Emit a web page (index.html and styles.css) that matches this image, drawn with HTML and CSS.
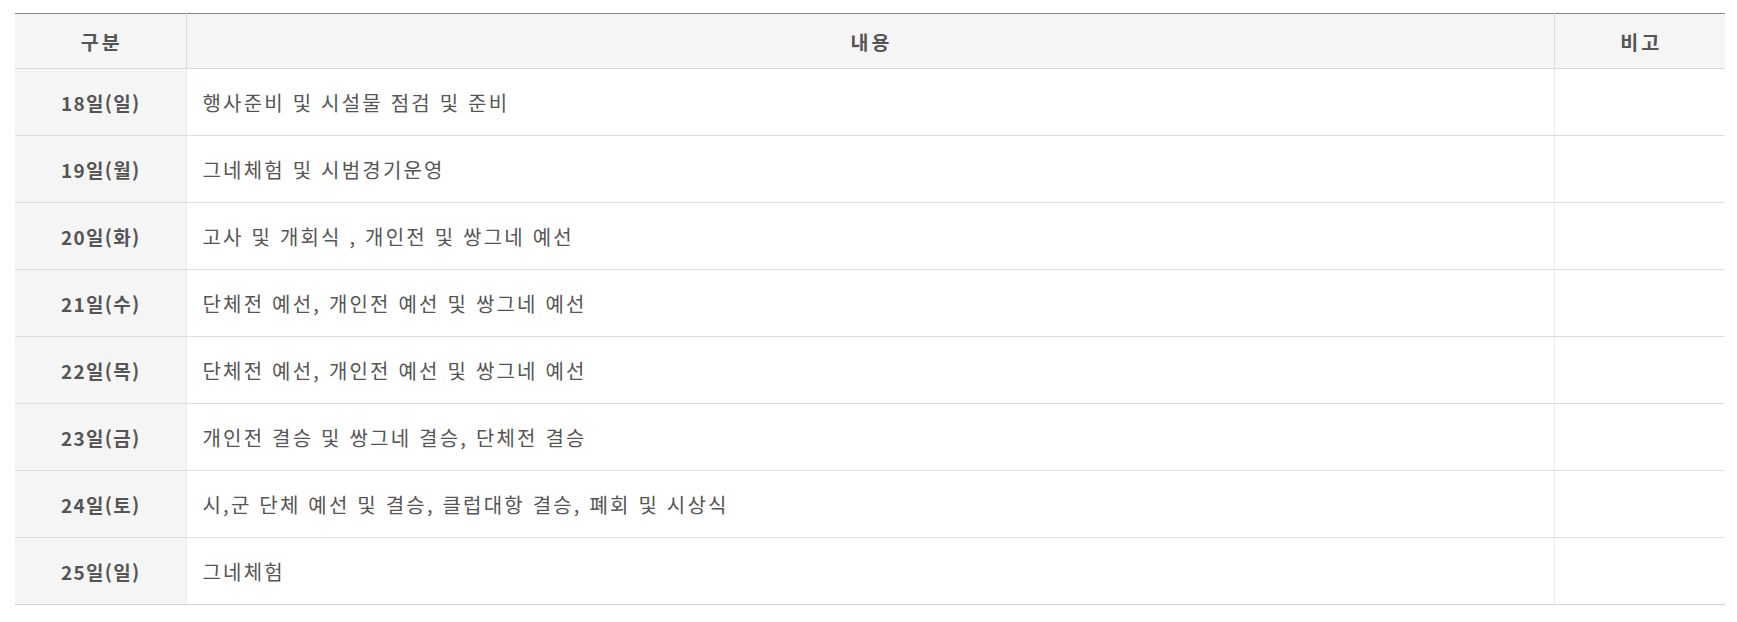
FILE: index.html
```html
<!DOCTYPE html>
<html lang="ko">
<head>
<meta charset="utf-8">
<link rel="stylesheet" href="styles.css">
</head>
<body>
<div class="wrap">
<table class="sched">
  <colgroup>
    <col class="c-day">
    <col class="c-body">
    <col class="c-note">
  </colgroup>
  <thead>
    <tr><th>구분</th><th>내용</th><th>비고</th></tr>
  </thead>
  <tbody>
    <tr><th>18일(일)</th><td>행사준비 및 시설물 점검 및 준비</td><td></td></tr>
    <tr><th>19일(월)</th><td>그네체험 및 시범경기운영</td><td></td></tr>
    <tr><th>20일(화)</th><td>고사 및 개회식 , 개인전 및 쌍그네 예선</td><td></td></tr>
    <tr><th>21일(수)</th><td>단체전 예선, 개인전 예선 및 쌍그네 예선</td><td></td></tr>
    <tr><th>22일(목)</th><td>단체전 예선, 개인전 예선 및 쌍그네 예선</td><td></td></tr>
    <tr><th>23일(금)</th><td>개인전 결승 및 쌍그네 결승, 단체전 결승</td><td></td></tr>
    <tr><th>24일(토)</th><td>시,군 단체 예선 및 결승, 클럽대항 결승, 폐회 및 시상식</td><td></td></tr>
    <tr><th>25일(일)</th><td>그네체험</td><td></td></tr>
  </tbody>
</table>
</div>
</body>
</html>
```

FILE: styles.css
```css
html, body {
  margin: 0;
  padding: 0;
  background: #fff;
}
.wrap {
  padding: 13px 12px 0 15px;
}
.sched {
  width: 1710px;
  border-collapse: collapse;
  table-layout: fixed;
  font-family: "Noto Sans CJK KR", "Noto Sans", sans-serif;
  color: #555;
  border-top: 1px solid #888;
  border-bottom: 1px solid #d4d4d4;
}
.c-day { width: 171px; }
.c-note { width: 171px; }
.sched thead th {
  height: 54px;
  padding: 0 0 0 3px;
  background: #f5f5f5;
  font-size: 19.5px;
  font-weight: 700;
  letter-spacing: 3px;
  text-align: center;
  border-bottom: 1px solid #dadada;
  border-left: 1px solid #dadada;
}
.sched thead th:first-child { border-left: 0; }
.sched tbody th {
  height: 66px;
  padding: 0 0 0 1px;
  background: #f5f5f5;
  font-size: 19px;
  font-weight: 700;
  letter-spacing: 1.3px;
  text-align: center;
  border-bottom: 1px solid #dedede;
}
.sched tbody td {
  height: 66px;
  padding: 0 0 0 16px;
  font-size: 20px;
  font-weight: 400;
  letter-spacing: 2.2px;
  text-align: left;
  border-bottom: 1px solid #dedede;
  border-left: 1px solid #ececec;
}
.sched tbody tr:last-child th,
.sched tbody tr:last-child td { border-bottom: 1px solid #d4d4d4; }
```
